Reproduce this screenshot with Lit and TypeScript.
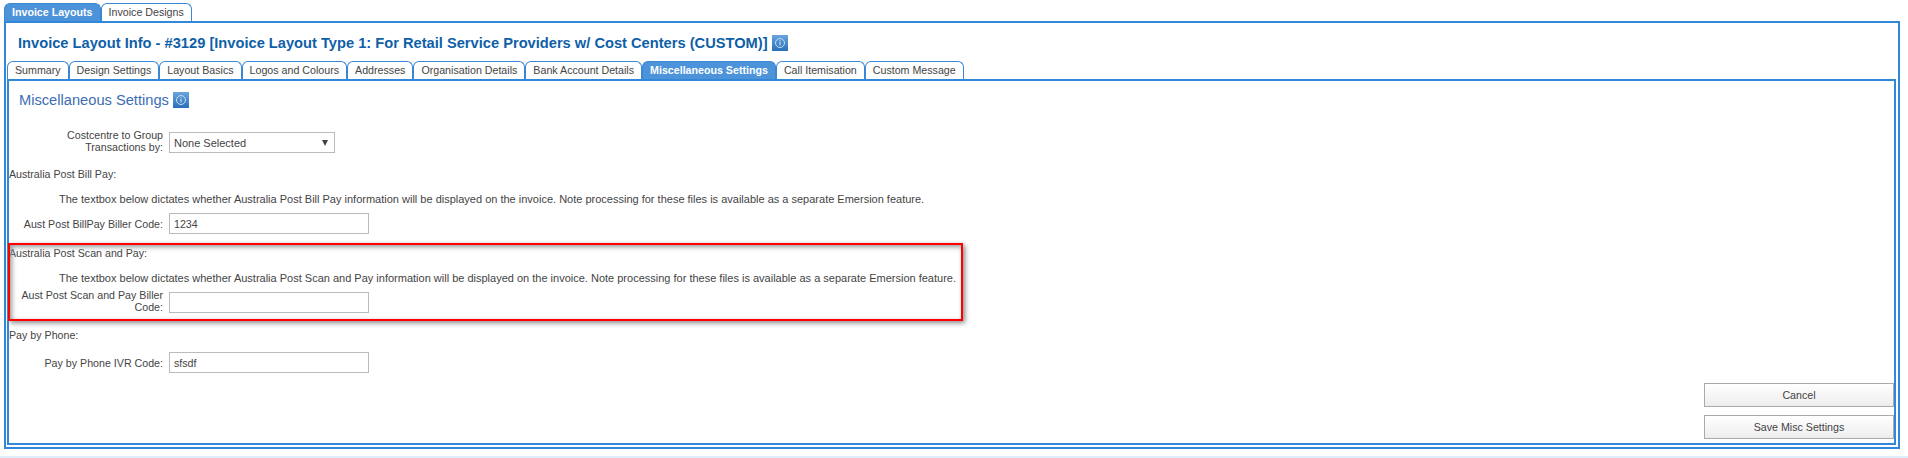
import { LitElement, html, css } from "lit";
import { customElement } from "lit/decorators.js";

const infoIcon = html`<svg class="info" width="16" height="16" viewBox="0 0 16 16">
  <defs><linearGradient id="ig" x1="0" y1="0" x2="0" y2="1"><stop offset="0" stop-color="#6aa5de"/><stop offset="1" stop-color="#2a6fb8"/></linearGradient></defs>
  <rect width="16" height="16" fill="url(#ig)"/>
  <circle cx="8" cy="8" r="4.5" fill="none" stroke="#c4dcf2" stroke-width="1"/>
  <rect x="7.5" y="7" width="1" height="3.5" fill="#dcebf8"/><rect x="7.5" y="5.2" width="1" height="1" fill="#dcebf8"/>
</svg>`;

const subTabs = ["Summary", "Design Settings", "Layout Basics", "Logos and Colours", "Addresses", "Organisation Details", "Bank Account Details", "Miscellaneous Settings", "Call Itemisation", "Custom Message"];
const activeSub = "Miscellaneous Settings";

@customElement("app-root")
export class AppRoot extends LitElement {
  static styles = css`
    :host { display: block; width: 1908px; height: 458px; position: relative; overflow: hidden; background: #fff;
      font-family: "Liberation Sans", Arial, sans-serif; font-size: 10.67px; color: #444; }
    * { box-sizing: border-box; }
    .page { padding: 3px 8px 0 4px; height: 456px; display: flex; flex-direction: column; }
    .band { height: 2px; background: #deeefb; }
    .tabs { display: flex; height: 18px; flex: none; }
    .tab { height: 18px; border: 1px solid #3a87d6; border-bottom: 0; border-radius: 6px 6px 0 0; padding: 0 7px 1px; display: flex; align-items: center; background: #fff; color: #444; white-space: nowrap; }
    .tab.on { background: #4d93d9; color: #fff; font-weight: bold; }
    .outer { border: 2px solid #3187d8; height: 428px; flex: none; padding: 0 2px 2px 1px; display: flex; flex-direction: column; }
    .title { height: 38px; flex: none; display: flex; align-items: center; padding: 2px 0 0 11px; gap: 4px; font-size: 14.67px; font-weight: bold; color: #0f5fa8; white-space: nowrap; }
    .inner { border: 2px solid #3187d8; flex: 1; display: flex; flex-direction: column; position: relative; padding: 0 0 4px 0; }
    .h2 { display: flex; align-items: center; gap: 4px; font-size: 14.67px; color: #3b6db4; height: 16px; margin: 11px 0 0 10px; white-space: nowrap; }
    .row { display: flex; align-items: center; }
    .row.two { align-items: flex-end; }
    .lab { width: 154px; text-align: right; line-height: 12px; margin-right: 6px; flex: none; }
    .field { height: 21px; width: 200px; border: 1px solid #bbb; background: #fff; padding: 0 4px; display: flex; align-items: center; }
    .select { width: 166px; justify-content: space-between; padding-right: 5px; font-size: 11px; }
    .arrow { width: 0; height: 0; border-left: 3px solid transparent; border-right: 3px solid transparent; border-top: 6px solid #444; margin-right: 1px; }
    .sec { line-height: 12px; }
    .desc { line-height: 12px; padding-left: 50px; white-space: nowrap; font-size: 11px; }
    .r1 { margin-top: 21px; }
    .s1 { margin-top: 15px; }
    .d1 { margin-top: 13px; }
    .f1 { margin-top: 8px; }
    .s2 { margin-top: 13px; }
    .d2 { margin-top: 13px; }
    .f2 { margin-top: 5px; }
    .s3 { margin-top: 16px; }
    .f3 { margin-top: 11px; }
    .actions { margin-top: auto; display: flex; flex-direction: column; align-items: flex-end; gap: 8px; }
    .btn { width: 190px; height: 24px; border: 1px solid #aaa; background: linear-gradient(#fff, #ededed); display: flex; align-items: center; justify-content: center; color: #444; }
    .mark { position: absolute; left: 8px; top: 243px; width: 955px; height: 78px; border: 2px solid #f00; box-shadow: 2px 2px 5px #888, inset 2px 2px 5px #999; pointer-events: none; }
  `;

  render() {
    return html`
      <div class="page">
        <div class="tabs">
          <div class="tab on">Invoice Layouts</div>
          <div class="tab">Invoice Designs</div>
        </div>
        <div class="outer">
          <div class="title">Invoice Layout Info - #3129 [Invoice Layout Type 1: For Retail Service Providers w/ Cost Centers (CUSTOM)] ${infoIcon}</div>
          <div class="tabs">
            ${subTabs.map((t) => html`<div class="tab ${t === activeSub ? "on" : ""}">${t}</div>`)}
          </div>
          <div class="inner">
            <div class="h2">Miscellaneous Settings ${infoIcon}</div>
            <div class="row two r1"><div class="lab">Costcentre to Group Transactions by:</div><div class="field select">None Selected<span class="arrow"></span></div></div>
            <div class="sec s1">Australia Post Bill Pay:</div>
            <div class="desc d1">The textbox below dictates whether Australia Post Bill Pay information will be displayed on the invoice. Note processing for these files is available as a separate Emersion feature.</div>
            <div class="row f1"><div class="lab">Aust Post BillPay Biller Code:</div><div class="field">1234</div></div>
            <div class="sec s2">Australia Post Scan and Pay:</div>
            <div class="desc d2">The textbox below dictates whether Australia Post Scan and Pay information will be displayed on the invoice. Note processing for these files is available as a separate Emersion feature.</div>
            <div class="row two f2"><div class="lab">Aust Post Scan and Pay Biller Code:</div><div class="field"></div></div>
            <div class="sec s3">Pay by Phone:</div>
            <div class="row f3"><div class="lab">Pay by Phone IVR Code:</div><div class="field">sfsdf</div></div>
            <div class="actions">
              <div class="btn">Cancel</div>
              <div class="btn">Save Misc Settings</div>
            </div>
          </div>
        </div>
      </div>
      <div class="band"></div>
      <div class="mark"></div>
    `;
  }
}
